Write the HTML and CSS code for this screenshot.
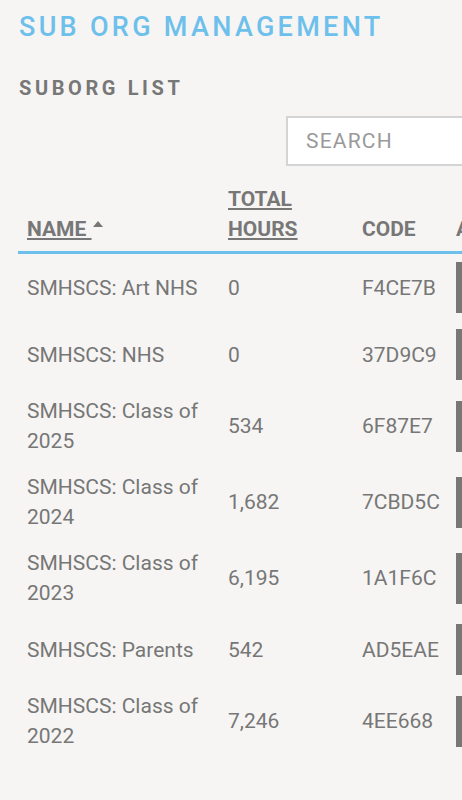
FILE: index.html
```html
<!DOCTYPE html>
<html lang="en">
<head>
<meta charset="utf-8">
<title>Sub Org Management</title>
<link rel="stylesheet" href="styles.css">
</head>
<body>
<main class="page">
  <h1 class="title">SUB ORG MANAGEMENT</h1>
  <h2 class="subtitle">SUBORG LIST</h2>
  <div class="toolbar">
    <input class="search" type="text" placeholder="SEARCH">
  </div>
  <table class="list">
    <colgroup>
      <col class="c-name"><col class="c-hours"><col class="c-code"><col class="c-act">
    </colgroup>
    <thead>
      <tr>
        <th><a class="sort" href="#">NAME <span class="caret"></span></a></th>
        <th><a class="sort" href="#">TOTAL HOURS</a></th>
        <th>CODE</th>
        <th>ACTIONS</th>
      </tr>
    </thead>
    <tbody>
      <tr><td>SMHSCS: Art NHS</td><td>0</td><td>F4CE7B</td><td><span class="btn">EDIT</span></td></tr>
      <tr><td>SMHSCS: NHS</td><td>0</td><td>37D9C9</td><td><span class="btn">EDIT</span></td></tr>
      <tr><td>SMHSCS: Class of 2025</td><td>534</td><td>6F87E7</td><td><span class="btn">EDIT</span></td></tr>
      <tr><td>SMHSCS: Class of 2024</td><td>1,682</td><td>7CBD5C</td><td><span class="btn">EDIT</span></td></tr>
      <tr><td>SMHSCS: Class of 2023</td><td>6,195</td><td>1A1F6C</td><td><span class="btn">EDIT</span></td></tr>
      <tr><td>SMHSCS: Parents</td><td>542</td><td>AD5EAE</td><td><span class="btn">EDIT</span></td></tr>
      <tr><td>SMHSCS: Class of 2022</td><td>7,246</td><td>4EE668</td><td><span class="btn">EDIT</span></td></tr>
    </tbody>
  </table>
</main>
</body>
</html>
```
FILE: styles.css
```css
html, body {
  margin: 0;
  padding: 0;
  background: #f6f5f3;
  overflow: hidden;
}
body {
  font-family: Roboto, "Liberation Sans", sans-serif;
  color: #777;
}
.page {
  padding: 11px 0 0 18px;
  width: 700px;
}
.title {
  margin: 0 0 0 1px;
  font-size: 27px;
  line-height: 32px;
  font-weight: 500;
  letter-spacing: 3.3px;
  color: #6ec0ec;
}
.subtitle {
  margin: 33px 0 0 1px;
  font-size: 20px;
  line-height: 24px;
  font-weight: 700;
  letter-spacing: 3.6px;
  color: #777;
}
.toolbar {
  margin-top: 16px;
  padding-left: 268px;
}
.search {
  display: block;
  box-sizing: border-box;
  width: 300px;
  height: 50px;
  margin: 0;
  padding: 0 0 0 18px;
  border: 2px solid #d4d4d4;
  background: #fff;
  font-family: Roboto, "Liberation Sans", sans-serif;
  font-size: 21px;
  letter-spacing: 1.2px;
  color: #777;
  outline: none;
}
.search::placeholder {
  color: #9a9a9a;
}
.list {
  margin-top: 10px;
  border-collapse: collapse;
  table-layout: fixed;
  width: 640px;
  font-size: 21px;
  line-height: 30px;
}
.c-name { width: 201px; }
.c-hours { width: 134px; }
.c-code { width: 94px; }
.c-act { width: 211px; }
th {
  text-align: left;
  vertical-align: bottom;
  font-weight: 700;
  color: #777;
  padding: 8px 9px 7px;
  border-bottom: 3px solid #6ec0ec;
}
.sort {
  color: #777;
  text-decoration: underline;
  text-decoration-thickness: 2px;
  text-underline-offset: 2px;
}
.caret {
  display: inline-block;
  width: 0;
  height: 0;
  border-left: 5px solid transparent;
  border-right: 5px solid transparent;
  border-bottom: 6px solid #777;
  vertical-align: 9px;
  margin-left: 1px;
}
td {
  padding: 8px 9px;
  vertical-align: middle;
  color: #777;
}
.btn {
  display: block;
  height: 51px;
  width: 120px;
  background: #777;
  color: #fff;
  font-weight: 700;
  font-size: 18px;
  line-height: 51px;
  text-align: center;
  letter-spacing: 1px;
}
```
